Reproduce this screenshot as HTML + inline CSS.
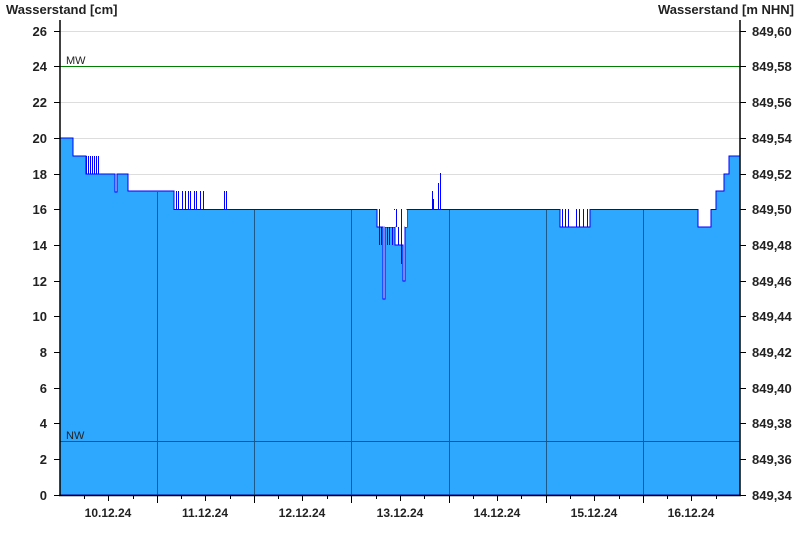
<!DOCTYPE html>
<html><head><meta charset="utf-8"><style>
body{margin:0;background:#fff;}
svg{display:block;font-family:"Liberation Sans",Arial,sans-serif;}
</style></head><body>
<svg width="800" height="550" viewBox="0 0 800 550">
<rect width="800" height="550" fill="#fff"/>
<text x="6" y="14" font-size="13" font-weight="bold" fill="#222">Wasserstand [cm]</text>
<text x="794" y="14" font-size="13" font-weight="bold" fill="#222" text-anchor="end">Wasserstand [m NHN]</text>
<!-- grid -->
<g stroke="#dddddd" stroke-width="1">
<line x1="60" y1="31.5" x2="740" y2="31.5"/>
<line x1="60" y1="102.5" x2="740" y2="102.5"/>
<line x1="60" y1="138.5" x2="740" y2="138.5"/>
<line x1="60" y1="174.5" x2="740" y2="174.5"/>
</g>
<!-- data fill -->
<path d="M60,495 L60,138 L73,138 L73,156 L86,156 L86,174 L115,174 L115,192 L117,192 L117,174 L128,174 L128,191 L174,191 L174,209.5 L377,209.5 L377,227 L380,227 L383,227 L383,299 L385,299 L385,227 L395,227 L395,245 L403,245 L403,281 L405,281 L405,227 L407,227 L407,209.5 L560,209.5 L560,227 L590,227 L590,209.5 L698,209.5 L698,227 L711,227 L711,209.5 L716,209.5 L716,191 L724,191 L724,174 L729,174 L729,156 L740,156 L740,495 Z" fill="#2ea8ff" stroke="#0000ff" stroke-width="1"/>
<!-- spikes -->
<g stroke="#0000ff" stroke-width="1" fill="none">
<path d="M86.5,156V174 M88.5,156V174 M90.5,156V174 M92.5,156V174 M94.5,156V174 M96.5,156V174 M98.5,156V174"/>
<path d="M176.5,191V209 M178.5,191V209 M182.5,191V209 M185.5,191V209 M188.5,191V209 M190.5,191V209 M194.5,191V209 M196.5,191V209 M200.5,191V209 M203.5,191V209"/>
<path d="M224.5,191V209 M226.5,191V209"/>
<path d="M379.5,209V245 M381.5,227V245 M387.5,227V245 M389.5,227V245 M392.5,227V245 M394.5,209V227 M396.5,209V227 M398.5,227V245 M401.5,209V264"/>
<path d="M432.5,191V209 M433.5,199V209 M438.5,183V209 M440.5,173V209"/>
<path d="M562.5,209V227 M565.5,209V227 M568.5,209V227 M576.5,209V227 M579.5,209V227 M583.5,209V227 M587.5,209V227"/>
</g>
<g fill="#fff">
<rect x="385" y="210" width="10" height="17"/><rect x="405" y="210" width="2" height="17"/>
</g>
<!-- day separators -->
<g stroke="#1c5a8a" stroke-width="1">
<line x1="157.5" y1="192" x2="157.5" y2="495"/>
<line x1="254.5" y1="210" x2="254.5" y2="495"/>
<line x1="351.5" y1="210" x2="351.5" y2="495"/>
<line x1="449.5" y1="210" x2="449.5" y2="495"/>
<line x1="546.5" y1="210" x2="546.5" y2="495"/>
<line x1="643.5" y1="210" x2="643.5" y2="495"/>
</g>
<line x1="60" y1="66.5" x2="740" y2="66.5" stroke="#008000" stroke-width="1"/>
<line x1="60" y1="441.5" x2="740" y2="441.5" stroke="#b01838" stroke-width="1"/>
<text x="66" y="64" font-size="11" fill="#222">MW</text>
<text x="66" y="439" font-size="11" fill="#222">NW</text>
<!-- axes -->
<g stroke="#000" stroke-width="1.5">
<line x1="60" y1="20" x2="60" y2="496"/>
<line x1="740" y1="20" x2="740" y2="496"/>
<line x1="59" y1="495.5" x2="741" y2="495.5"/>
</g>
<g stroke="#000" stroke-width="1">
<path d="M54,31.5H60 M54,66.5H60 M54,102.5H60 M54,138.5H60 M54,174.5H60 M54,209.5H60 M54,245.5H60 M54,281.5H60 M54,316.5H60 M54,352.5H60 M54,388.5H60 M54,423.5H60 M54,459.5H60 M54,495.5H60"/>
<path d="M740,31.5H746 M740,66.5H746 M740,102.5H746 M740,138.5H746 M740,174.5H746 M740,209.5H746 M740,245.5H746 M740,281.5H746 M740,316.5H746 M740,352.5H746 M740,388.5H746 M740,423.5H746 M740,459.5H746 M740,495.5H746"/>
<path d="M157.5,495V503 M254.5,495V503 M351.5,495V503 M449.5,495V503 M546.5,495V503 M643.5,495V503"/>
<path d="M84.5,495V499 M108.5,495V501 M133.5,495V499 M181.5,495V499 M205.5,495V501 M230.5,495V499 M278.5,495V499 M302.5,495V501 M327.5,495V499 M376.5,495V499 M400.5,495V501 M424.5,495V499 M473.5,495V499 M497.5,495V501 M521.5,495V499 M570.5,495V499 M594.5,495V501 M619.5,495V499 M667.5,495V499 M691.5,495V501 M716.5,495V499"/>
</g>
<g font-size="13" font-weight="bold" fill="#222" text-anchor="end">
<text x="47" y="36">26</text><text x="47" y="71">24</text><text x="47" y="107">22</text><text x="47" y="143">20</text><text x="47" y="179">18</text><text x="47" y="214">16</text><text x="47" y="250">14</text><text x="47" y="286">12</text><text x="47" y="321">10</text><text x="47" y="357">8</text><text x="47" y="393">6</text><text x="47" y="428">4</text><text x="47" y="464">2</text><text x="47" y="500">0</text>
</g>
<g font-size="13" font-weight="bold" fill="#222">
<text x="752" y="36">849,60</text><text x="752" y="71">849,58</text><text x="752" y="107">849,56</text><text x="752" y="143">849,54</text><text x="752" y="179">849,52</text><text x="752" y="214">849,50</text><text x="752" y="250">849,48</text><text x="752" y="286">849,46</text><text x="752" y="321">849,44</text><text x="752" y="357">849,42</text><text x="752" y="393">849,40</text><text x="752" y="428">849,38</text><text x="752" y="464">849,36</text><text x="752" y="500">849,34</text>
</g>
<g font-size="12" font-weight="bold" fill="#222" text-anchor="middle">
<text x="108" y="517">10.12.24</text><text x="205" y="517">11.12.24</text><text x="302" y="517">12.12.24</text><text x="400" y="517">13.12.24</text><text x="497" y="517">14.12.24</text><text x="594" y="517">15.12.24</text><text x="691" y="517">16.12.24</text>
</g>
</svg>
</body></html>
